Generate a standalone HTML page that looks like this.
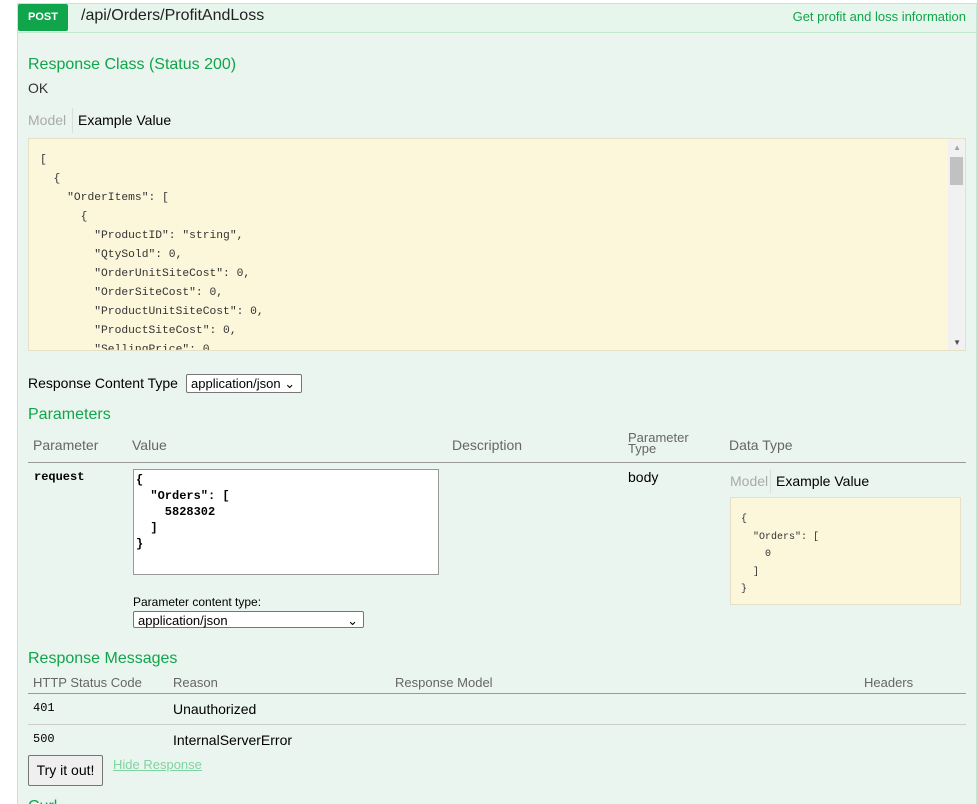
<!DOCTYPE html>
<html style="height:804px;overflow:hidden"><head><meta charset="utf-8"><style>
body{margin:0;width:977px;height:804px;overflow:hidden;background:#fff;font-family:"Liberation Sans",Arial,sans-serif;font-size:14px;color:#333;position:relative}
.a{position:absolute;white-space:nowrap}
.g{color:#10a54a}
.mono{font-family:"Liberation Mono","DejaVu Sans Mono",monospace}
</style></head><body>
<div class="a" style="left:17px;top:3px;width:958px;height:820px;background:#ebf5ef;border:1px solid #c3e8d1"></div>
<div class="a" style="left:18px;top:4px;width:958px;height:28px;background:#e7f6ec;border-bottom:1px solid #c3e8d1"></div>
<div class="a" style="left:18px;top:4px;width:50px;height:27px;background:#10a54a;border-radius:2px;color:#fff;font-weight:bold;font-size:11px;line-height:27px;text-align:center">POST</div>
<div class="a" style="left:81px;top:7px;font-size:16px;color:#222">/api/Orders/ProfitAndLoss</div>
<div class="a g" style="right:11px;top:9px;font-size:13px">Get profit and loss information</div>

<div class="a g" style="left:28px;top:56px;font-size:16px">Response Class (Status 200)</div>
<div class="a" style="left:28px;top:80px;font-size:14px">OK</div>
<div class="a" style="left:28px;top:112px;font-size:14px;color:#aaa">Model</div>
<div class="a" style="left:72px;top:108px;width:1px;height:25px;background:#ddd"></div>
<div class="a" style="left:78px;top:112px;font-size:14px;color:#000">Example Value</div>

<div class="a" style="left:28px;top:138px;width:936px;height:211px;background:#fcf6db;border:1px solid #e5e0c6;overflow:hidden">
<div class="a" style="right:0;top:0;width:17px;height:211px;background:#f1f1f1"></div>
<div class="a" style="right:2px;top:18px;width:13px;height:28px;background:#c1c1c1"></div>
<div class="a" style="right:4px;top:4px;font-size:8px;color:#a3a3a3">▲</div>
<div class="a" style="right:4px;bottom:3px;font-size:8px;color:#505050">▼</div>
<pre class="mono" style="position:absolute;left:11px;top:12px;margin:0;font-size:11.3px;line-height:19px;color:#333">[
  {
    "OrderItems": [
      {
        "ProductID": "string",
        "QtySold": 0,
        "OrderUnitSiteCost": 0,
        "OrderSiteCost": 0,
        "ProductUnitSiteCost": 0,
        "ProductSiteCost": 0,
        "SellingPrice": 0</pre>
</div>

<div class="a" style="left:28px;top:375px;font-size:14px;color:#000">Response Content Type</div>
<div class="a" style="left:186px;top:374px;height:17px;border:1px solid #767676;border-radius:2px;background:#fff;font-size:13px;color:#000;line-height:17px;padding-left:4px;width:110px">application/json ⌄</div>

<div class="a g" style="left:28px;top:406px;font-size:16px">Parameters</div>
<div class="a" style="left:33px;top:437px;color:#666">Parameter</div>
<div class="a" style="left:132px;top:437px;color:#666">Value</div>
<div class="a" style="left:452px;top:437px;color:#666">Description</div>
<div class="a" style="left:628px;top:432px;color:#666;font-size:13px;line-height:11px;white-space:normal;width:70px">Parameter Type</div>
<div class="a" style="left:729px;top:437px;color:#666">Data Type</div>
<div class="a" style="left:28px;top:462px;width:938px;height:1px;background:#999"></div>

<div class="a mono" style="left:34px;top:470px;font-size:12px;font-weight:bold;color:#000">request</div>
<div class="a" style="left:133px;top:469px;width:304px;height:104px;background:#fff;border:1px solid #999"></div>
<pre class="mono" style="position:absolute;left:136px;top:472px;margin:0;font-size:12px;line-height:16px;font-weight:bold;color:#000">{
  "Orders": [
    5828302
  ]
}</pre>
<div class="a" style="left:133px;top:595px;font-size:12px;color:#000">Parameter content type:</div>
<div class="a" style="left:133px;top:611px;width:231px;height:17px;border:1px solid #767676;border-radius:2px;background:#fff;font-size:13px;color:#000;line-height:17px;padding-left:4px;box-sizing:border-box">application/json<span style="position:absolute;right:5px">⌄</span></div>

<div class="a" style="left:628px;top:469px;color:#000">body</div>
<div class="a" style="left:730px;top:473px;color:#aaa">Model</div>
<div class="a" style="left:770px;top:469px;width:1px;height:24px;background:#ddd"></div>
<div class="a" style="left:776px;top:473px;color:#000">Example Value</div>
<div class="a" style="left:730px;top:497px;width:229px;height:106px;background:#fcf6db;border:1px solid #e5e0c6"></div>
<pre class="mono" style="position:absolute;left:741px;top:511px;margin:0;font-size:10px;line-height:17.5px;color:#333">{
  "Orders": [
    0
  ]
}</pre>

<div class="a g" style="left:28px;top:650px;font-size:16px">Response Messages</div>
<div class="a" style="left:33px;top:675px;color:#666;font-size:13px">HTTP Status Code</div>
<div class="a" style="left:173px;top:675px;color:#666;font-size:13px">Reason</div>
<div class="a" style="left:395px;top:675px;color:#666;font-size:13px">Response Model</div>
<div class="a" style="left:864px;top:675px;color:#666;font-size:13px">Headers</div>
<div class="a" style="left:28px;top:693px;width:938px;height:1px;background:#999"></div>
<div class="a mono" style="left:33px;top:701px;font-size:12px;color:#000">401</div>
<div class="a" style="left:173px;top:701px;color:#000">Unauthorized</div>
<div class="a" style="left:28px;top:724px;width:938px;height:1px;background:#ccc"></div>
<div class="a mono" style="left:33px;top:732px;font-size:12px;color:#000">500</div>
<div class="a" style="left:173px;top:732px;color:#000">InternalServerError</div>
<div class="a" style="left:28px;top:755px;width:73px;height:29px;border:1px solid #767676;border-radius:2px;background:#efefef;font-size:14px;color:#000;line-height:29px;text-align:center">Try it out!</div>
<div class="a" style="left:113px;top:757px;font-size:13px;color:#7fd4a1;text-decoration:underline">Hide Response</div>
<div class="a g" style="left:28px;top:798px;font-size:16px">Curl</div>
</body></html>
